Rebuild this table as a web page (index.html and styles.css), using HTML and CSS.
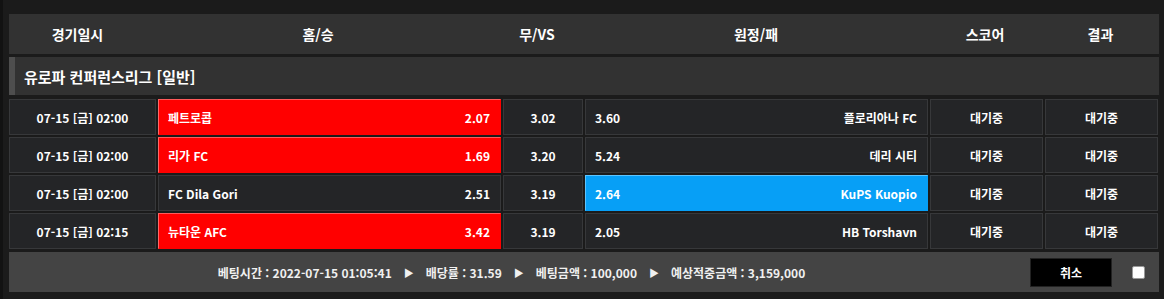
FILE: index.html
```html
<!DOCTYPE html>
<html lang="ko">
<head>
<meta charset="utf-8">
<link rel="stylesheet" href="styles.css">
</head>
<body>
<div class="page">
  <div class="thead">
    <div>경기일시</div>
    <div>홈/승</div>
    <div>무/VS</div>
    <div>원정/패</div>
    <div>스코어</div>
    <div>결과</div>
  </div>
  <div class="league">유로파 컨퍼런스리그 [일반]</div>
  <div class="rows">
    <div class="row">
      <div class="cell c">07-15 [금] 02:00</div>
      <div class="cell team red"><span>페트로콥</span><span>2.07</span></div>
      <div class="cell c">3.02</div>
      <div class="cell team"><span>3.60</span><span>플로리아나 FC</span></div>
      <div class="cell c">대기중</div>
      <div class="cell c">대기중</div>
    </div>
    <div class="row">
      <div class="cell c">07-15 [금] 02:00</div>
      <div class="cell team red"><span>리가 FC</span><span>1.69</span></div>
      <div class="cell c">3.20</div>
      <div class="cell team"><span>5.24</span><span>데리 시티</span></div>
      <div class="cell c">대기중</div>
      <div class="cell c">대기중</div>
    </div>
    <div class="row">
      <div class="cell c">07-15 [금] 02:00</div>
      <div class="cell team"><span>FC Dila Gori</span><span>2.51</span></div>
      <div class="cell c">3.19</div>
      <div class="cell team blue"><span>2.64</span><span>KuPS Kuopio</span></div>
      <div class="cell c">대기중</div>
      <div class="cell c">대기중</div>
    </div>
    <div class="row">
      <div class="cell c">07-15 [금] 02:15</div>
      <div class="cell team red"><span>뉴타운 AFC</span><span>3.42</span></div>
      <div class="cell c">3.19</div>
      <div class="cell team"><span>2.05</span><span>HB Torshavn</span></div>
      <div class="cell c">대기중</div>
      <div class="cell c">대기중</div>
    </div>
  </div>
  <div class="foot">
    <div class="summary">
      <span>베팅시간 : 2022-07-15 01:05:41</span>
      <span class="tri">▶</span>
      <span>배당률 : 31.59</span>
      <span class="tri">▶</span>
      <span>베팅금액 : 100,000</span>
      <span class="tri">▶</span>
      <span>예상적중금액 : 3,159,000</span>
    </div>
    <button class="cancel">취소</button>
    <span class="check"></span>
  </div>
</div>
</body>
</html>
```
FILE: styles.css
```css
* { box-sizing: border-box; }
html, body { margin: 0; padding: 0; }
body {
  background: #1b1b1b;
  width: 1164px;
  height: 299px;
  overflow: hidden;
  font-family: "Noto Sans CJK KR", "Noto Sans", sans-serif;
  color: #fff;
  font-weight: 700;
}
.page {
  border-left: 3px solid #121212;
  padding: 14px 5px 0 6px;
  height: 299px;
}
.thead {
  height: 40px;
  background: #323232;
  display: grid;
  grid-template-columns: 137px 344px 94px 344px 114px 117px;
  align-items: center;
  text-align: center;
  font-size: 14px;
}
.league {
  margin-top: 3px;
  height: 38px;
  background: #323232;
  border-left: 6px solid #4e4e4e;
  padding-left: 9px;
  display: flex;
  align-items: center;
  font-size: 15px;
}
.rows {
  margin-top: 4px;
  display: flex;
  flex-direction: column;
  gap: 2px;
}
.row {
  display: grid;
  grid-template-columns: 147px 343px 80px 343px 113px 113px;
  gap: 2px;
  height: 36px;
}
.cell {
  background: #242527;
  border: 1px solid #37383a;
  display: flex;
  align-items: center;
  font-size: 12px;
}
.c { justify-content: center; }
.team {
  justify-content: space-between;
  padding: 0 10px 0 9px;
}
.red {
  background: #ff0000;
  border-color: #ff5a5a #ff0000 #ff0000 #ff6a6a;
}
.blue {
  background: #079ff6;
  border-color: #5cc4ff #079ff6 #079ff6 #5cc4ff;
}
.foot {
  margin-top: 3px;
  height: 40px;
  background: #444;
  display: flex;
  align-items: center;
  font-size: 12px;
}
.summary {
  flex: 1;
  display: flex;
  justify-content: center;
  align-items: center;
  gap: 12px;
  padding-right: 8px;
  color: #f0f0f0;
}
.tri { font-size: 10px; }
.cancel {
  width: 82px;
  height: 29px;
  background: #000;
  border: 1px solid #222;
  color: #fff;
  font-family: inherit;
  font-weight: 700;
  font-size: 12px;
  margin-right: 20px;
  margin-left: 8px;
}
.check {
  width: 13px;
  height: 13px;
  background: #fff;
  border: 1px solid #999;
  border-radius: 2px;
  margin-right: 14px;
}
```
